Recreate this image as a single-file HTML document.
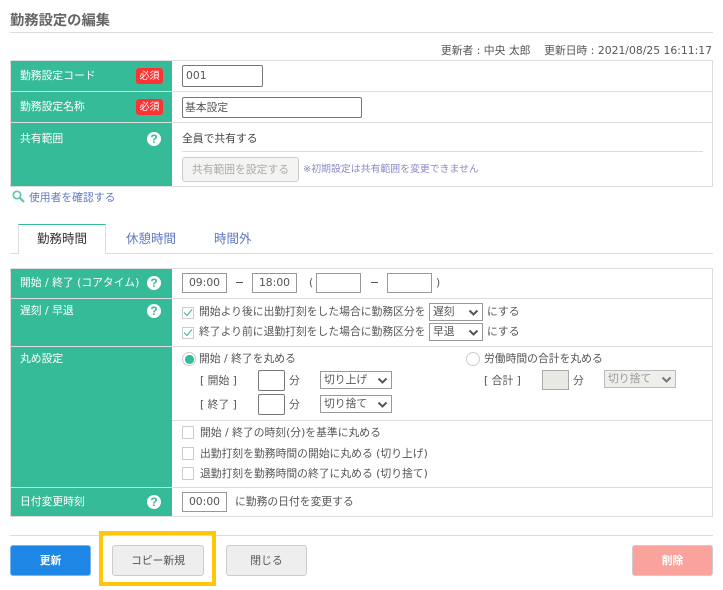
<!DOCTYPE html>
<html lang="ja">
<head>
<meta charset="utf-8">
<style>
html,body{margin:0;padding:0;background:#fff}
#p{position:relative;width:723px;height:590px;overflow:hidden;background:#fff;font-family:"DejaVu Sans","Noto Sans CJK JP",sans-serif;font-size:10.8px;color:#555}
#p div,#p span.t{position:absolute;box-sizing:border-box}
.t{position:absolute;white-space:nowrap;line-height:16px;height:16px;margin-top:1px}
.w{color:#fff}
.l{background:#ddd}
.g{background:#36bb98}
.in{border:1px solid #999;background:#fff;line-height:18px;white-space:nowrap;color:#555}
.c{text-align:center}
.sel{border:1px solid #999;background:#fff;white-space:nowrap;color:#555;padding-left:3px;line-height:16px}
.sel svg{position:absolute;right:3px;top:5px}
.cb{width:12px;height:13px;border:1px solid #ccc;background:#fff}
.cb svg{position:absolute;left:0;top:0}
.rad{width:14px;height:14px;border:1px solid #ccc;border-radius:50%;background:#fff}
.rad i{position:absolute;left:2px;top:2px;width:8.5px;height:8.5px;border-radius:50%;background:#36bb98}
.q{width:14px;height:14px;border-radius:50%;background:#fff;color:#36bb98;text-align:center;font:bold 12px/14px "Liberation Sans",sans-serif}
.req{left:136px;width:27px;height:16px;background:#f33;border-radius:3px;color:#fff;font-size:10px;line-height:17px;text-align:center}
.btn{border:1px solid #ccc;border-radius:3px;background:#eee;text-align:center;line-height:30px;color:#555}
</style>
</head>
<body>
<div id="p">
<span class="t" style="left:10px;top:11px;font-size:14.3px;font-weight:bold;color:#666;line-height:20px;height:20px;margin-top:0">勤務設定の編集</span>
<div class="l" style="left:10px;top:32px;width:703px;height:1px"></div>
<span class="t" style="right:11px;top:42px;color:#555">更新者 : 中央 太郎 &nbsp;&nbsp; 更新日時 : 2021/08/25 16:11:17</span>

<!-- Table 1 -->
<div class="g" style="left:10px;top:60px;width:162px;height:127px"></div>
<div class="l" style="left:10px;top:60px;width:703px;height:1px"></div>
<div class="l" style="left:10px;top:91px;width:703px;height:1px"></div>
<div class="l" style="left:10px;top:122px;width:703px;height:1px"></div>
<div class="l" style="left:10px;top:186px;width:703px;height:1px"></div>
<div class="l" style="left:10px;top:60px;width:1px;height:127px"></div>
<div class="l" style="left:712px;top:60px;width:1px;height:127px"></div>
<span class="t w" style="left:20px;top:67px">勤務設定コード</span>
<div class="req" style="top:68px">必須</div>
<span class="t w" style="left:20px;top:98px">勤務設定名称</span>
<div class="req" style="top:99px">必須</div>
<span class="t w" style="left:20px;top:130px">共有範囲</span>
<div class="q" style="left:147px;top:132px">?</div>
<div class="in" style="left:182px;top:65px;width:81px;height:22px;border-color:#777;border-radius:2px;padding-left:3px;line-height:20px">001</div>
<div class="in" style="left:182px;top:97px;width:180px;height:21px;border-color:#777;border-radius:2px;padding-left:2px;line-height:20px">基本設定</div>
<span class="t" style="left:182px;top:130px;color:#444">全員で共有する</span>
<div class="l" style="left:182px;top:151px;width:521px;height:1px"></div>
<div class="btn" style="left:182px;top:157px;width:117px;height:25px;line-height:23px;color:#aaa;background:#f4f4f2">共有範囲を設定する</div>
<span class="t" style="left:303px;top:161px;font-size:9.9px;color:#8a8ac8">※初期設定は共有範囲を変更できません</span>
<svg style="position:absolute;left:12px;top:190px" width="13" height="13" viewBox="0 0 13 13"><circle cx="5" cy="5" r="3.7" fill="none" stroke="#5cc8ac" stroke-width="1.7"/><path d="M8 8l4 4" stroke="#5cc8ac" stroke-width="2.2"/></svg>
<span class="t" style="left:29px;top:189px;color:#5f78c4">使用者を確認する</span>

<!-- Tabs -->
<div class="l" style="left:10px;top:253px;width:703px;height:1px"></div>
<div style="left:18px;top:224px;width:88px;height:30px;background:#fff;border:1px solid #ddd;border-top:1px solid #36bb98;border-bottom:none"></div>
<span class="t" style="left:37px;top:230px;font-size:12.5px;color:#333">勤務時間</span>
<span class="t" style="left:126px;top:230px;font-size:12.5px;color:#5f78c4">休憩時間</span>
<span class="t" style="left:214px;top:230px;font-size:12.5px;color:#5f78c4">時間外</span>

<!-- Table 2 -->
<div class="g" style="left:10px;top:269px;width:162px;height:248px"></div>
<div class="l" style="left:10px;top:268px;width:703px;height:1px"></div>
<div class="l" style="left:10px;top:298px;width:703px;height:1px"></div>
<div class="l" style="left:10px;top:346px;width:703px;height:1px"></div>
<div class="l" style="left:172px;top:420px;width:541px;height:1px"></div>
<div class="l" style="left:10px;top:487px;width:703px;height:1px"></div>
<div class="l" style="left:10px;top:516px;width:703px;height:1px"></div>
<div class="l" style="left:10px;top:268px;width:1px;height:249px"></div>
<div class="l" style="left:712px;top:268px;width:1px;height:249px"></div>

<span class="t w" style="left:20px;top:274px">開始 / 終了 (コアタイム)</span>
<div class="q" style="left:147px;top:276px">?</div>
<span class="t w" style="left:20px;top:302px">遅刻 / 早退</span>
<div class="q" style="left:147px;top:304px">?</div>
<span class="t w" style="left:20px;top:350px">丸め設定</span>
<span class="t w" style="left:20px;top:493px">日付変更時刻</span>
<div class="q" style="left:147px;top:495px">?</div>

<div class="in c" style="left:182px;top:273px;width:45px;height:20px">09:00</div>
<div style="left:236px;top:282px;width:7px;height:1px;background:#555"></div>
<div class="in c" style="left:252px;top:273px;width:45px;height:20px">18:00</div>
<span class="t" style="left:309px;top:274px">(</span>
<div class="in" style="left:316px;top:273px;width:45px;height:20px"></div>
<div style="left:371px;top:282px;width:7px;height:1px;background:#555"></div>
<div class="in" style="left:387px;top:273px;width:45px;height:20px"></div>
<span class="t" style="left:436px;top:274px">)</span>

<div class="cb" style="left:182px;top:307px;height:12px"><svg width="10" height="10" viewBox="0 0 10 10"><path d="M1 4.5l3 3 5-6" fill="none" stroke="#36bb98" stroke-width="1"/></svg></div>
<span class="t" style="left:199px;top:303px">開始より後に出勤打刻をした場合に勤務区分を</span>
<div class="sel" style="left:429px;top:303px;width:54px;height:18px">遅刻<svg width="11" height="7" viewBox="0 0 11 7"><path d="M1.5 1.5l4 4 4-4" fill="none" stroke="#555" stroke-width="2"/></svg></div>
<span class="t" style="left:487px;top:303px">にする</span>
<div class="cb" style="left:182px;top:327px;height:12px"><svg width="10" height="10" viewBox="0 0 10 10"><path d="M1 4.5l3 3 5-6" fill="none" stroke="#36bb98" stroke-width="1"/></svg></div>
<span class="t" style="left:199px;top:323px">終了より前に退勤打刻をした場合に勤務区分を</span>
<div class="sel" style="left:429px;top:323px;width:54px;height:18px">早退<svg width="11" height="7" viewBox="0 0 11 7"><path d="M1.5 1.5l4 4 4-4" fill="none" stroke="#555" stroke-width="2"/></svg></div>
<span class="t" style="left:487px;top:323px">にする</span>

<div class="rad" style="left:182px;top:352px"><i></i></div>
<span class="t" style="left:199px;top:350px">開始 / 終了を丸める</span>
<div class="rad" style="left:466px;top:352px"></div>
<span class="t" style="left:484px;top:350px">労働時間の合計を丸める</span>

<span class="t" style="left:200px;top:372px">[ 開始 ]</span>
<div class="in" style="left:258px;top:370px;width:27px;height:21px;border-color:#777;border-radius:2px"></div>
<span class="t" style="left:289px;top:372px">分</span>
<div class="sel" style="left:320px;top:371px;width:72px;height:18px">切り上げ<svg width="11" height="7" viewBox="0 0 11 7"><path d="M1.5 1.5l4 4 4-4" fill="none" stroke="#555" stroke-width="2"/></svg></div>
<span class="t" style="left:200px;top:396px">[ 終了 ]</span>
<div class="in" style="left:258px;top:394px;width:27px;height:21px;border-color:#777;border-radius:2px"></div>
<span class="t" style="left:289px;top:396px">分</span>
<div class="sel" style="left:320px;top:395px;width:72px;height:18px">切り捨て<svg width="11" height="7" viewBox="0 0 11 7"><path d="M1.5 1.5l4 4 4-4" fill="none" stroke="#555" stroke-width="2"/></svg></div>

<span class="t" style="left:484px;top:372px">[ 合計 ]</span>
<div class="in" style="left:542px;top:370px;width:27px;height:20px;background:#e9e9e3;border-color:#aaa"></div>
<span class="t" style="left:573px;top:372px">分</span>
<div class="sel" style="left:604px;top:370px;width:72px;height:18px;background:#eeeeea;border-color:#bbb;color:#999">切り捨て<svg width="11" height="7" viewBox="0 0 11 7"><path d="M1.5 1.5l4 4 4-4" fill="none" stroke="#777" stroke-width="2"/></svg></div>

<div class="cb" style="left:182px;top:426px"></div>
<span class="t" style="left:200px;top:424px">開始 / 終了の時刻(分)を基準に丸める</span>
<div class="cb" style="left:182px;top:447px"></div>
<span class="t" style="left:200px;top:445px">出勤打刻を勤務時間の開始に丸める (切り上げ)</span>
<div class="cb" style="left:182px;top:467px"></div>
<span class="t" style="left:200px;top:465px">退勤打刻を勤務時間の終了に丸める (切り捨て)</span>

<div class="in c" style="left:182px;top:492px;width:45px;height:20px">00:00</div>
<span class="t" style="left:235px;top:493px">に勤務の日付を変更する</span>

<!-- Footer -->
<div class="l" style="left:10px;top:535px;width:703px;height:1px"></div>
<div class="btn" style="left:10px;top:545px;width:81px;height:31px;background:#1e87e5;border-color:#7ab5ea;color:#fff;font-weight:bold">更新</div>
<div class="btn" style="left:112px;top:545px;width:92px;height:31px">コピー新規</div>
<div class="btn" style="left:226px;top:545px;width:81px;height:31px">閉じる</div>
<div class="btn" style="left:632px;top:545px;width:81px;height:31px;background:#faa29c;color:#fff;font-weight:bold">削除</div>
<div style="left:99px;top:531px;width:117px;height:55px;border:4.5px solid #ffc60a"></div>
</div>
</body>
</html>
